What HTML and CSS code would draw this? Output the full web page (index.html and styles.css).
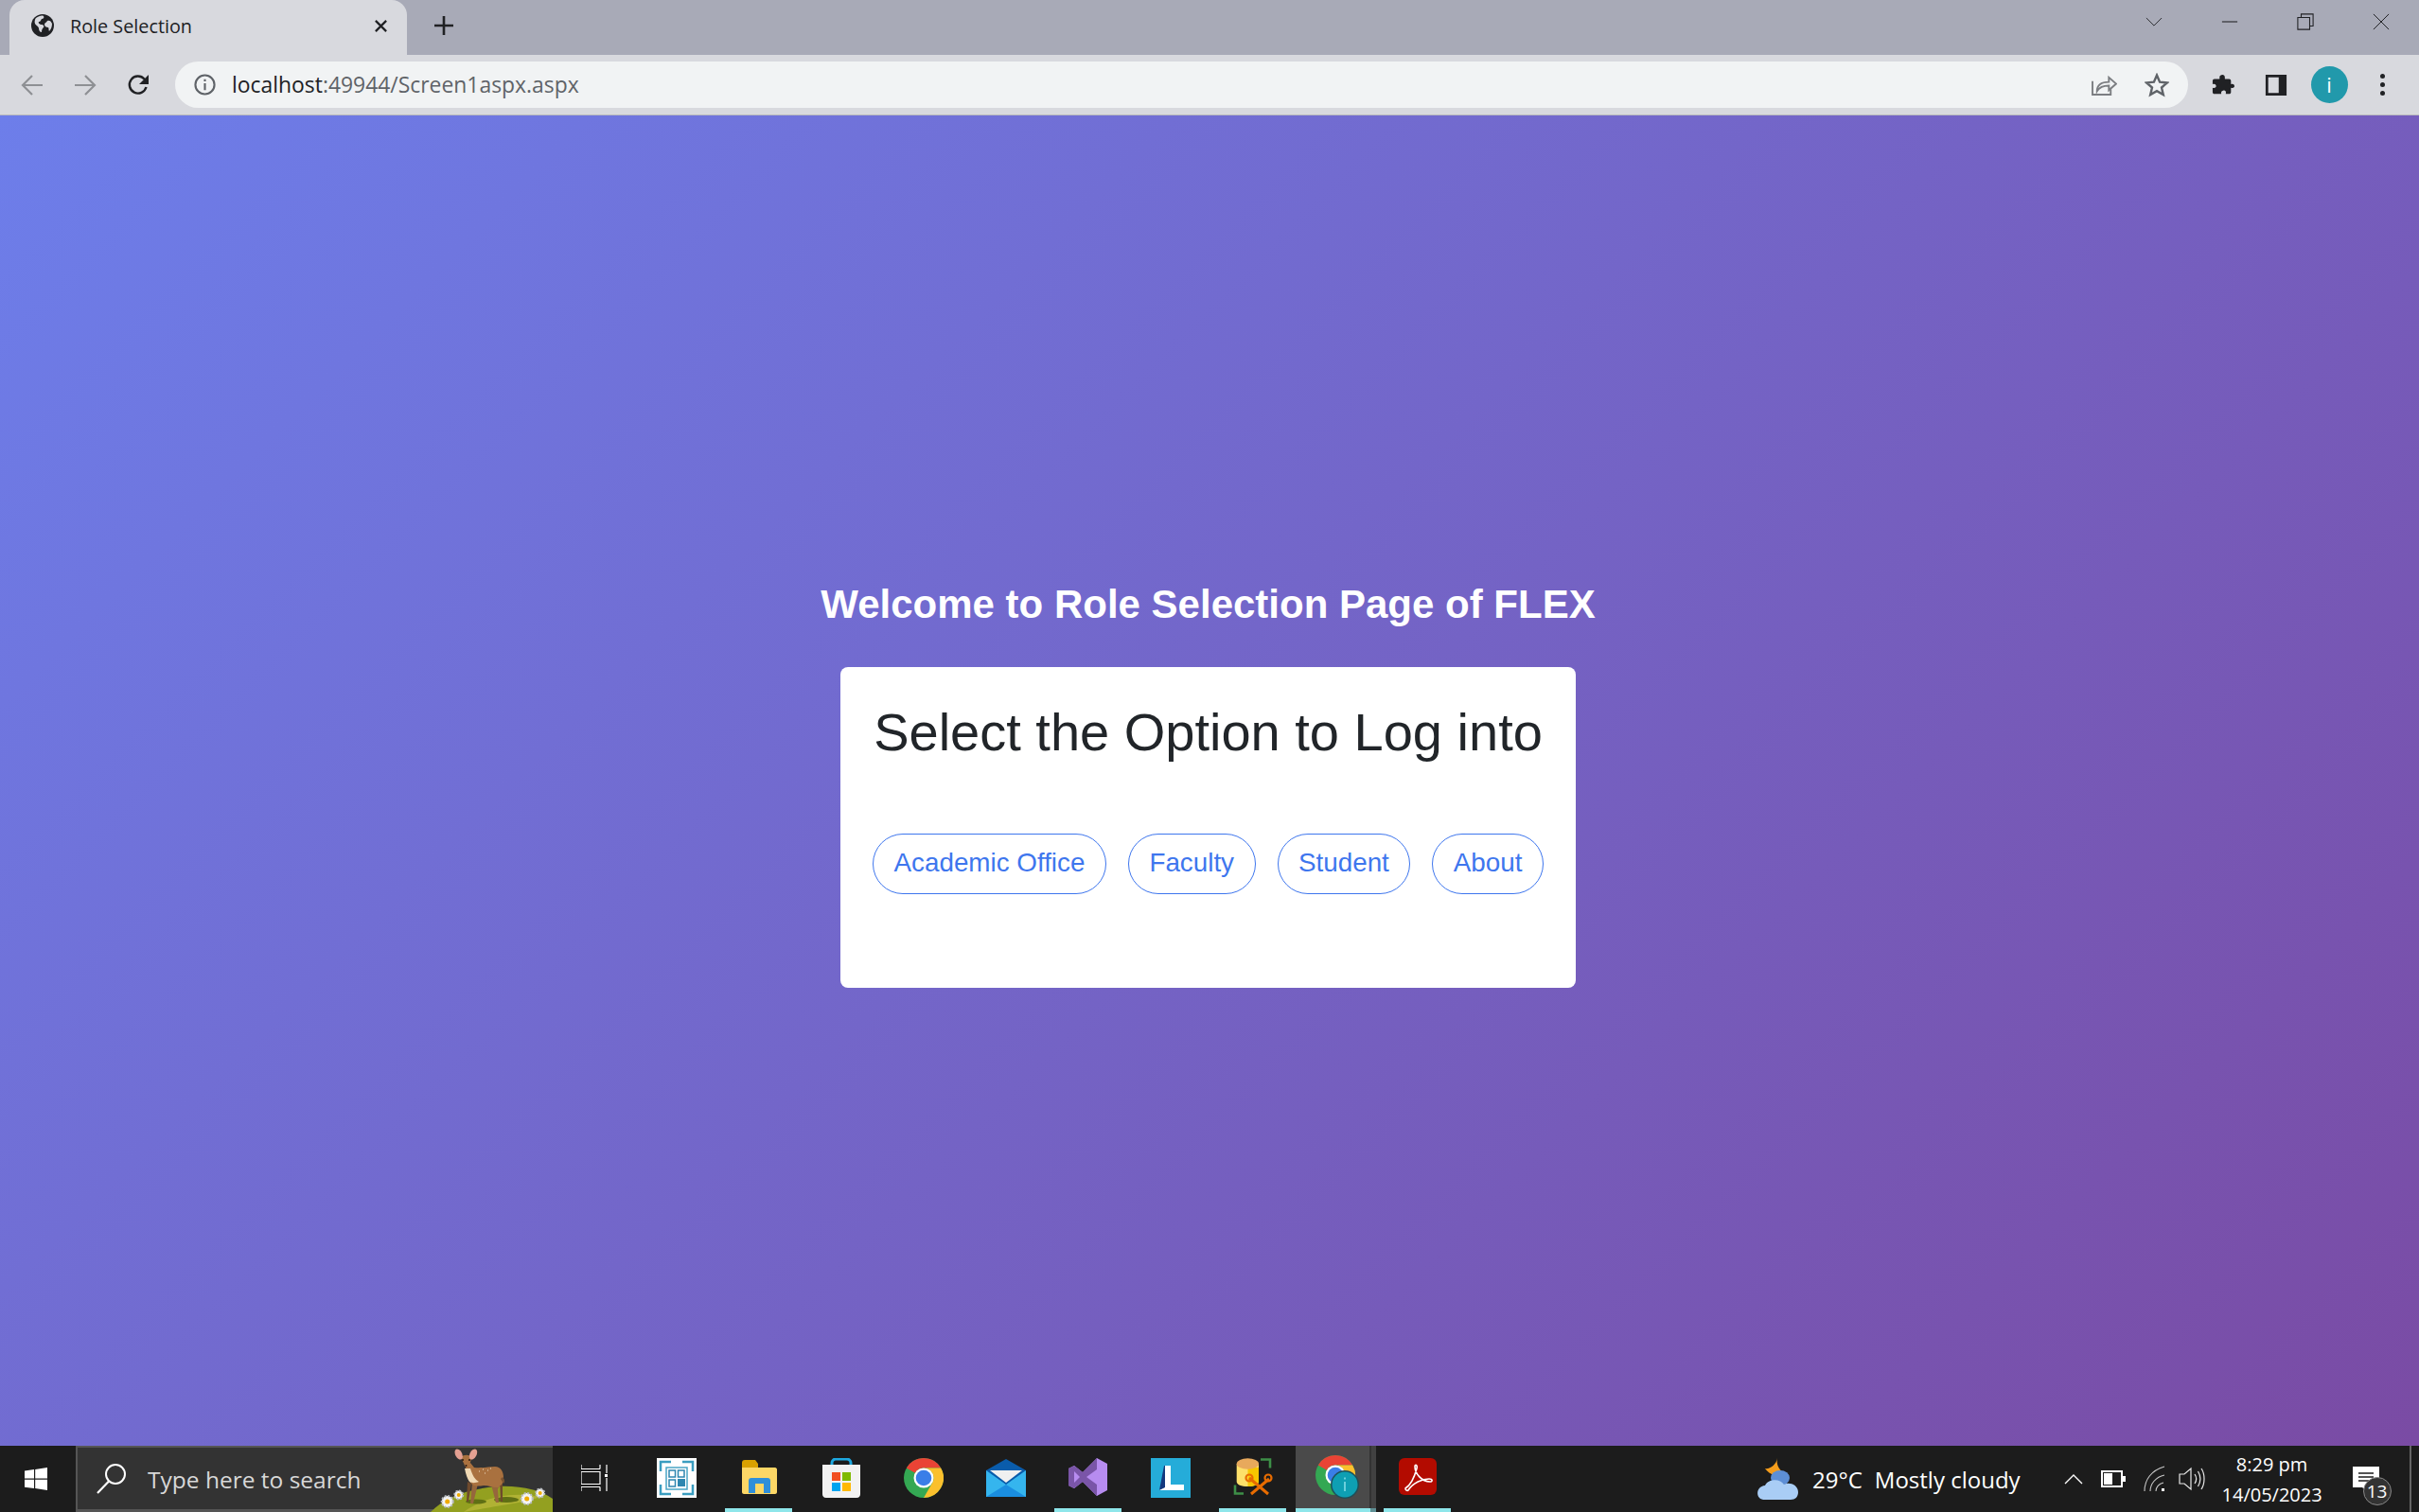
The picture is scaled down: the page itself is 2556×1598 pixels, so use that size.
FILE: index.html
```html
<!DOCTYPE html>
<html>
  <head>
    <meta charset="utf-8">
    <title>Role Selection</title>
    <link rel="stylesheet" href="styles.css">
  </head>
  <body>
    <div class="tabstrip">
      <div class="tab">
        <svg class="tab-globe" viewBox="0 0 24 24"><circle cx="12" cy="12" r="12" fill="#202124"/><path d="M5 4c3-2 6-3 8-2 1 1 0 3-2 3-1 1-1 3-3 3-1 1 1 3 3 3s3 2 2 3-2 2-2 5c-2 0-3-2-3-4s-3-3-4-5 0-5 1-6zM17 7c2-1 4 0 5 3 0 3-1 6-3 8-1-1 0-3-1-4-2 0-4-1-4-3s2-2 3-4z" fill="#d8d9de"/></svg>
        <span class="tab-title">Role Selection</span>
        <svg class="tab-close" viewBox="0 0 16 16"><path d="M2 2l12 12M14 2L2 14" stroke="#202124" stroke-width="2.4"/></svg>
      </div>
      <svg class="tab-new" viewBox="0 0 22 22"><path d="M11 1v20M1 11h20" stroke="#202124" stroke-width="2.6"/></svg>
      <div class="window-btns">
        <svg class="win-btn win-chevron" viewBox="0 0 20 12"><path d="M1 1l9 9 9-9" fill="none" stroke="#202124" stroke-width="1"/></svg>
        <svg class="win-btn" viewBox="0 0 20 20"><path d="M1 10h18" stroke="#202124" stroke-width="1.2"/></svg>
        <svg class="win-btn" viewBox="0 0 20 20"><path d="M1 5h14v14H1zM5 5V1h14v14h-4" fill="none" stroke="#202124" stroke-width="1.2"/></svg>
        <svg class="win-btn" viewBox="0 0 20 20"><path d="M1 1l18 18M19 1L1 19" stroke="#202124" stroke-width="1.1"/></svg>
      </div>
    </div>

    <div class="toolbar">
      <div class="nav-btn"><svg viewBox="0 0 24 24"><path d="M23 12H2M12 2L2 12l10 10" fill="none" stroke="#8e9094" stroke-width="2.2"/></svg></div>
      <div class="nav-btn"><svg viewBox="0 0 24 24"><path d="M1 12h21M12 2l10 10-10 10" fill="none" stroke="#8e9094" stroke-width="2.2"/></svg></div>
      <div class="nav-btn"><svg viewBox="0 0 24 24"><path d="M20.5 14a9 9 0 1 1-2-8.5L21 8" fill="none" stroke="#202124" stroke-width="2.4"/><path d="M23 1v10H13z" fill="#202124"/></svg></div>
      <div class="omnibox">
        <svg class="omni-info" viewBox="0 0 24 24"><circle cx="12" cy="12" r="10.5" fill="none" stroke="#5f6368" stroke-width="2.2"/><path d="M12 10.5V18M12 6v2.4" stroke="#5f6368" stroke-width="2.2"/></svg>
        <span class="url"><span class="url-host">localhost</span>:49944/Screen1aspx.aspx</span>
        <svg class="omni-share" viewBox="0 0 28 26"><path d="M1 9v15h20v-6" fill="none" stroke="#7c7e82" stroke-width="2"/><path d="M6 20c0-7 5-10 13-10V5l8 7-8 7v-5c-6 0-10 1-13 6z" fill="none" stroke="#7c7e82" stroke-width="2"/></svg>
        <svg class="omni-star" viewBox="0 0 26 26"><path d="M13 2.500l3.100 7.200 7.800.7-5.900 5.100 1.800 7.600L13 19.100l-6.800 4 1.800-7.600-5.900-5.100 7.800-.7z" fill="none" stroke="#5f6368" stroke-width="2.400"/></svg>
      </div>
      <div class="nav-btn nav-first"><svg viewBox="0 0 26 26"><path d="M10 2c2-2 5-1 5 2v2h5c1 0 2 1 2 2v4c3-1 4 1 4 2s-1 3-4 2v5c0 1-1 2-2 2h-4c1-3-1-4-2-4s-4 1-3 4H3c-1 0-2-1-2-2v-5c3 1 4-1 4-2S4 11 1 12V8c0-1 1-2 2-2h6V4c0-1 0-1 1-2z" fill="#202124"/></svg></div>
      <div class="nav-btn"><svg viewBox="0 0 26 26"><path d="M1 1h24v24H1zM4 4v18h12V4z" fill="#202124" fill-rule="evenodd"/></svg></div>
      <div class="nav-btn"><div class="avatar">i</div></div>
      <div class="nav-btn"><div class="dots"><i></i><i></i><i></i></div></div>
    </div>

    <main class="page">
      <h1 class="page-title">Welcome to Role Selection Page of FLEX</h1>
      <div class="card">
        <h2 class="card-title">Select the Option to Log into</h2>
        <div class="role-list">
          <a class="role-btn" href="#">Academic Office</a>
          <a class="role-btn" href="#">Faculty</a>
          <a class="role-btn" href="#">Student</a>
          <a class="role-btn" href="#">About</a>
        </div>
      </div>
    </main>

    <footer class="taskbar">
      <div class="start"><svg viewBox="0 0 24 24"><path d="M0 3.500l10-1.400v9.400H0zM11.200 2L24 0v11.500H11.200zM0 12.700h10v9.400L0 20.700zM11.200 12.700H24V24l-12.800-1.900z" fill="#fff"/></svg></div>
      <div class="search">
        <svg class="search-icon" viewBox="0 0 32 32"><circle cx="20" cy="11" r="10" fill="none" stroke="#fff" stroke-width="2"/><path d="M13 18.500L1 31" stroke="#fff" stroke-width="2.200"/></svg>
        <span class="search-text">Type here to search</span>
        <svg class="search-art" viewBox="0 0 134 70">
          <path d="M5 70c14-15 40-25 72-27 24-1 44 4 57 13v14z" fill="#93a020"/>
          <path d="M40 70c20-15 50-22 80-16-12 6-50 10-80 16z" fill="#b0b234"/>
          <ellipse cx="53" cy="59" rx="11" ry="2.500" fill="#5f6f14"/>
          <ellipse cx="85" cy="57" rx="13" ry="3" fill="#5f6f14"/>
          <!-- deer, far legs then body -->
          <path d="M44 38l-1 21h2l3-19zM78 36l1 23h2l0-22z" fill="#6f4a2c"/>
          <path d="M49 38l-2 23h3l5-21zM69 41l5 19h3l-1-14 3-6z" fill="#96663c"/>
          <path d="M41 20l6-2 4 5c8 1 16-1 22-1 6 0 9 5 9 12 0 5-2 8-6 10-6 0-10-2-15-2-6 1-10 1-13-2-3-3-4-8-4-12z" fill="#a9713f"/>
          <path d="M41 24c1 6 3 11 5 14 3 2 7 1 10 0-4-2-7-7-9-14z" fill="#f0d9b4"/>
          <path d="M81 33c2 2 3 5 1 7l-3-5z" fill="#7a5230"/>
          <path d="M37 12c3-3 9-3 11 0 0 4-2 8-3 10-2 1-3 0-4-1-1-3-3-6-4-9z" fill="#a9713f"/>
          <ellipse cx="34.700" cy="9" rx="3.500" ry="6" fill="#e4a092" transform="rotate(-28 34.700 9)"/>
          <ellipse cx="50" cy="9" rx="3.500" ry="6" fill="#e4a092" transform="rotate(28 50 9)"/>
          <circle cx="39" cy="15" r="1" fill="#2a1a10"/>
          <circle cx="46" cy="15" r="1" fill="#2a1a10"/>
          <circle cx="42.500" cy="21" r="1" fill="#2a1a10"/>
          <path d="M56 27h1M60 25h1M65 26h1M62 29h1M68 24h1" stroke="#f0e0c8" stroke-width="1.200"/>
          <circle class="daisy" cx="22.700" cy="59" r="6"/><circle cx="22.700" cy="59" r="2.500" fill="#efab00"/>
          <circle class="daisy" cx="34.700" cy="52" r="4.500"/><circle cx="34.700" cy="52" r="2" fill="#efab00"/>
          <circle class="daisy" cx="106.700" cy="56" r="6"/><circle cx="106.700" cy="56" r="2.500" fill="#efab00"/>
          <circle class="daisy" cx="120.700" cy="50" r="4.500"/><circle cx="120.700" cy="50" r="2" fill="#efab00"/>
        </svg>
      </div>
      <div class="slot"><svg class="ico-taskview" viewBox="0 0 28 28"><path d="M0 4.500h20M0 7.500h20v13H0zM0 23.500h20M20 28v-4.500M0 28v-4.500M0 4.500V0M20 4.500V0M27 0v9M27 14v14" fill="none" stroke="#fff" stroke-width="1.200"/><rect x="25" y="10" width="4" height="3" fill="#fff"/></svg></div>
      <div class="slot">
        <svg class="ico" viewBox="0 0 42 42"><rect width="42" height="42" fill="#fff"/><path d="M4 14V4h11M27 4h11v10M38 28v10H27M15 38H4V28" fill="none" stroke="#3a9dc0" stroke-width="2.500"/><rect x="10" y="10" width="22" height="23" fill="none" stroke="#4aa5c5" stroke-width="1.500"/><rect x="13" y="13" width="6.500" height="7" fill="none" stroke="#2e86b0" stroke-width="1.500"/><rect x="22.500" y="13" width="6.500" height="7" fill="none" stroke="#2e86b0" stroke-width="1.500"/><rect x="13" y="23" width="6.500" height="7" fill="none" stroke="#2e86b0" stroke-width="1.500"/><rect x="22" y="22" width="8" height="8" fill="#2e86b0"/></svg>
      </div>
      <div class="slot slot-open">
        <svg class="ico" viewBox="0 0 40 42"><path d="M2 6c0-2 1-3 3-3h11l3 4v6H2z" fill="#d9a100"/><path d="M2 11h35c1 0 2 1 2 2v24c0 1-1 2-2 2H4c-1 0-2-1-2-2z" fill="#fcd766"/><path d="M9 38V25c0-2 1-3 3-3h17c2 0 3 1 3 3v13h-7V28H16v10z" fill="#2f8fd9"/></svg>
      </div>
      <div class="slot">
        <svg class="ico" viewBox="0 0 40 42"><path d="M10 9V5c0-2 2-4 4-4h12c2 0 4 2 4 4v4" fill="none" stroke="#1da8e0" stroke-width="3"/><path d="M0 7h40v31c0 2-1 4-4 4H4c-3 0-4-2-4-4z" fill="#f2f2f2"/><rect x="10" y="15" width="9" height="9" fill="#f25022"/><rect x="21" y="15" width="9" height="9" fill="#7fba00"/><rect x="10" y="26" width="9" height="9" fill="#00a4ef"/><rect x="21" y="26" width="9" height="9" fill="#ffb900"/></svg>
      </div>
      <div class="slot">
        <svg class="ico" viewBox="0 0 42 42"><use href="#chrome-logo"/></svg>
      </div>
      <div class="slot">
        <svg class="ico" viewBox="0 0 42 42"><path d="M21 1L0 13v28h42V13z" fill="#0a5cab"/><path d="M4 13h34L21 26z" fill="#f0f0f0"/><path d="M0 13l21 15 21-15v28H0z" fill="#35b5ee"/><path d="M0 41l21-13 21 13z" fill="#1a8ee0"/></svg>
      </div>
      <div class="slot slot-open">
        <svg class="ico" viewBox="0 0 42 42"><path d="M30 1l11 6v28l-11 6-15-15-9 7-6-3V12l6-3 9 7z" fill="#b78cf0"/><path d="M30 1L15 16 6 9 0 12v18l6 3 9-7 15 15V29L19 21 30 13z" fill="#7a55a8"/><path d="M6 15v12l6-6z" fill="#b78cf0"/></svg>
      </div>
      <div class="slot">
        <svg class="ico" viewBox="0 0 42 42"><rect width="42" height="42" fill="#25acd9"/><path d="M9 34l6-2V8h-1z" fill="#13387e"/><path d="M15 8h6v20h14v6H9l6-3z" fill="#fff"/></svg>
      </div>
      <div class="slot slot-open">
        <svg class="ico" viewBox="0 0 42 42"><path d="M3.700 7v19c0 3 5 5 11.500 5S27 29 27 26V7z" fill="#fde06a"/><path d="M15.500 11H27v15c0 3-5 5-11.500 5z" fill="#f7c600"/><ellipse cx="15.400" cy="7" rx="11.700" ry="5.700" fill="#e8a95c"/><path d="M29 2.500h10v9M11 38.500H2v-9" fill="none" stroke="#3d8f47" stroke-width="2.600"/><path d="M17 22l20 17M38 23L19 39" stroke="#e86c00" stroke-width="3"/><circle cx="17" cy="22" r="3.500" fill="none" stroke="#e86c00" stroke-width="2.200"/><circle cx="37" cy="22" r="3.500" fill="none" stroke="#e86c00" stroke-width="2.200"/></svg>
      </div>
      <div class="slot slot-open slot-active">
        <svg class="ico" viewBox="0 0 46 46"><use href="#chrome-logo"/><circle cx="31" cy="31" r="15" fill="#1f4f58"/><circle cx="31" cy="31" r="13.500" fill="#0e9fb3"/><path d="M31 28v10M31 23.500v2" stroke="#6ccfdc" stroke-width="2"/></svg>
      </div>
      <div class="slot slot-open">
        <svg class="ico" viewBox="0 0 42 42"><rect width="40" height="39" x="1" y="1" rx="6" fill="#b30b00"/><path d="M8 33c5-3 9-10 12-21 1-4-2-5-2-2 0 7 7 16 16 16 3 0 3-3-1-3-7 0-17 4-22 12-1 1-3 0-3-2z" fill="none" stroke="#fff" stroke-width="1.600"/></svg>
      </div>
      <div class="tray">
        <svg class="ico-weather" viewBox="0 0 44 44"><path d="M21 0c-1 5 0 11 7 16l-9 3c-5-2-9-5-11-8 5 1 12-4 13-11z" fill="#f59d1c"/><ellipse cx="24" cy="21" rx="10" ry="8" fill="#5d8fd6"/><path d="M8 44c-11 0-10-14 0-15 3-7 16-8 20-1 5-3 15 0 15 8 0 5-3 8-8 8z" fill="#a9cdf5"/></svg>
        <span class="temp">29°C</span>
        <span class="cond">Mostly cloudy</span>
        <svg class="ico-chevron" viewBox="0 0 20 12"><path d="M1 11l9-9 9 9" fill="none" stroke="#fff" stroke-width="1.400"/></svg>
        <svg class="ico-battery" viewBox="0 0 26 18"><path d="M1 1h21v16H1z" fill="none" stroke="#fff" stroke-width="2"/><rect x="3" y="3" width="9" height="12" fill="#fff"/><rect x="23" y="6" width="3" height="6" fill="#fff"/></svg>
        <svg class="ico-wifi" viewBox="0 0 24 28"><path d="M1 27C1 15 8 5 22 1M7 27c0-8 6-15 15-17M13 27c0-4 3-8 8-9" fill="none" stroke="#c8c8c8" stroke-width="1.100"/><rect x="19" y="24" width="3" height="3" fill="#fff"/></svg>
        <svg class="ico-volume" viewBox="0 0 28 28"><path d="M1 9h5l7-6v22l-7-6H1zM17 9c2 3 2 7 0 10M20.500 6c3 5 3 11 0 16M24 3c4 6 4 16 0 22" fill="none" stroke="#e8e8e8" stroke-width="1.200"/></svg>
        <div class="clock"><span>8:29 pm</span><span>14/05/2023</span></div>
        <div class="notify">
          <svg class="ico-note" viewBox="0 0 28 26"><path d="M0 0h28v22H14l1 4-5-4H0z" fill="#fff"/><path d="M6 7h16M6 11h16M6 15h16" stroke="#1c1c1c" stroke-width="1.500"/></svg>
          <span class="badge">13</span>
        </div>
      </div>
    </footer>

    <svg class="defs" width="0" height="0">
      <defs>
        <g id="chrome-logo">
          <circle cx="21" cy="21" r="21" fill="#34a853"/>
          <path d="M21 0A21 21 0 0 1 39.190 10.500H21A10.500 10.500 0 0 0 11.900 15.750L2.810 10.500A21 21 0 0 1 21 0z" fill="#ea4335"/>
          <path d="M39.190 10.500A21 21 0 0 1 21 42L30.090 26.250A10.500 10.500 0 0 0 21 10.500z" fill="#fbc02d"/>
          <circle cx="21" cy="21" r="10.500" fill="#fff"/>
          <circle cx="21" cy="21" r="8.300" fill="#3a7ee8"/>
        </g>
      </defs>
    </svg>
  </body>
</html>
```

FILE: styles.css
```css
html, body {
  height: 100%;
  margin: 0;
}
body {
  display: flex;
  flex-direction: column;
  overflow: hidden;
  font-family: "Liberation Sans", Arial, sans-serif;
}

/* browser frame */
.tabstrip {
  height: 58px;
  flex: none;
  display: flex;
  align-items: center;
  background-color: #a8aab7;
}
.tab {
  width: 420px;
  height: 58px;
  margin-left: 10px;
  box-sizing: border-box;
  display: flex;
  align-items: center;
  padding: 0 20px 4px 23px;
  background-color: #d8d9de;
  border-radius: 16px 16px 0 0;
}
.tab-globe {
  width: 24px;
  height: 24px;
}
.tab-title {
  flex: 1;
  margin-left: 17px;
  font: 19.8px "Open Sans", sans-serif;
  color: #202124;
}
.tab-close {
  width: 15px;
  height: 15px;
}
.tab-new {
  width: 22px;
  height: 22px;
  margin: -4px 0 0 28px;
}
.window-btns {
  margin-left: auto;
  display: flex;
  align-items: center;
  gap: 62px;
  padding: 0 31px 12px 0;
}
.win-btn {
  width: 18px;
  height: 18px;
}
.win-chevron {
  height: 11px;
}

.toolbar {
  height: 63px;
  flex: none;
  display: flex;
  align-items: center;
  padding: 0 11px 0 6px;
  background-color: #d8d9de;
  border-bottom: 1px solid #b9babd;
}
.nav-btn {
  width: 56px;
  height: 49px;
  flex: none;
  display: flex;
  align-items: center;
  justify-content: center;
}
.nav-btn svg {
  width: 24px;
  height: 24px;
}
.nav-first {
  margin-left: 9px;
}
.omnibox {
  flex: 1;
  height: 49px;
  margin-left: 11px;
  display: flex;
  align-items: center;
  padding: 0 20px;
  background-color: #f1f3f4;
  border-radius: 25px;
}
.omni-info {
  width: 23px;
  height: 23px;
}
.url {
  flex: 1;
  margin-left: 17px;
  font: 22.9px "Open Sans", sans-serif;
  color: #5f6368;
}
.url-host {
  color: #202124;
}
.omni-share {
  width: 27px;
  height: 25px;
}
.omni-star {
  width: 26px;
  height: 26px;
  margin-left: 29px;
}
.avatar {
  width: 39px;
  height: 39px;
  border-radius: 50%;
  background-color: #2199ab;
  color: #fff;
  font: 22px/39px "Open Sans", sans-serif;
  text-align: center;
}
.dots {
  display: flex;
  flex-direction: column;
  gap: 4px;
}
.dots i {
  width: 5px;
  height: 5px;
  border-radius: 50%;
  background-color: #202124;
}

/* page */
.page {
  flex: 1;
  display: flex;
  flex-direction: column;
  align-items: center;
  padding: 492px 3px 0 0;
  background: linear-gradient(135deg, #6d7eea, #7a4ba4);
}
.page-title {
  margin: 0;
  font-size: 42px;
  line-height: 50px;
  font-weight: bold;
  color: #fff;
}
.card {
  width: 777px;
  height: 339px;
  margin-top: 41px;
  box-sizing: border-box;
  padding: 35px 35px 0;
  background-color: #fff;
  border-radius: 8px;
}
.card-title {
  margin: 0;
  font-size: 56px;
  line-height: 67px;
  font-weight: normal;
  color: #212529;
  text-align: center;
  white-space: nowrap;
}
.role-list {
  display: flex;
  justify-content: center;
  gap: 23px;
  margin-top: 74px;
}
.role-btn {
  height: 64px;
  box-sizing: border-box;
  padding: 0 21.5px;
  border: 1px solid #3e76ee;
  border-radius: 32px;
  font-size: 27.8px;
  line-height: 60px;
  color: #3e76ee;
  text-decoration: none;
  white-space: nowrap;
}

/* windows taskbar */
.taskbar {
  height: 70px;
  flex: none;
  display: flex;
  align-items: stretch;
  background-color: #1c1c1c;
  color: #fff;
  font-family: "Open Sans", sans-serif;
}
.start {
  width: 80px;
  flex: none;
  display: flex;
  align-items: center;
  padding-left: 26px;
  box-sizing: border-box;
}
.start svg {
  width: 24px;
  height: 24px;
}
.search {
  width: 504px;
  flex: none;
  position: relative;
  box-sizing: border-box;
  display: flex;
  align-items: center;
  padding-left: 20px;
  background-color: #333;
  border: 2px solid #555;
  border-bottom-width: 3px;
  border-right-width: 0;
}
.search-icon {
  width: 32px;
  height: 32px;
}
.search-text {
  margin: 2px 0 0 22px;
  font-size: 24.5px;
  color: #d8d8d8;
}
.search-art {
  position: absolute;
  right: 0;
  bottom: -3px;
  width: 134px;
  height: 70px;
}
.daisy {
  fill: #f4f4f4;
  stroke: #b8bcc0;
  stroke-width: 2;
  stroke-dasharray: 2 1.5;
}
.slot {
  width: 87px;
  flex: none;
  box-sizing: border-box;
  display: flex;
  align-items: center;
  justify-content: center;
  padding-bottom: 2px;
}
.ico {
  width: 42px;
  height: 42px;
}
.ico-taskview {
  width: 28px;
  height: 28px;
}
.slot-open {
  border-bottom: 4px solid transparent;
  padding-bottom: 0;
  border-image: linear-gradient(to right, transparent 9px, #8ee6ea 9px, #8ee6ea 78px, transparent 78px) 1;
}
.slot-active {
  width: 85px;
  margin-left: 2px;
  padding-right: 1px;
  background: linear-gradient(to right, #4a4a4a 78px, #333 78px, #333 80px, #414141 80px);
  background-clip: padding-box;
  border-image: linear-gradient(to right, #8ee6ea 78px, #5f8f94 78px) 1;
}
.slot-active .ico {
  width: 46px;
  height: 46px;
  margin: 0 -4px 0 0;
}
.tray {
  flex: 1;
  display: flex;
  align-items: center;
  padding-left: 316px;
  border-right: 2px solid #666;
  margin-right: 8px;
  font-size: 24px;
}
.ico-weather {
  width: 44px;
  height: 44px;
  flex: none;
}
.temp {
  margin-left: 14px;
}
.cond {
  margin-left: 13px;
}
.ico-chevron {
  width: 20px;
  height: 12px;
  margin-left: 46px;
}
.ico-battery {
  width: 26px;
  height: 18px;
  margin-left: 19px;
}
.ico-wifi {
  width: 24px;
  height: 28px;
  margin-left: 19px;
}
.ico-volume {
  width: 28px;
  height: 28px;
  margin-left: 13px;
}
.clock {
  width: 104px;
  margin-left: 19px;
  display: flex;
  flex-direction: column;
  align-items: center;
  gap: 5px;
  font-size: 20px;
  line-height: 27px;
}
.notify {
  margin-left: 33px;
  position: relative;
  display: flex;
}
.ico-note {
  width: 28px;
  height: 26px;
}
.badge {
  position: absolute;
  left: 11px;
  top: 11px;
  width: 28px;
  height: 28px;
  border-radius: 50%;
  background-color: #333;
  border: 1px solid #888;
  font-size: 19px;
  line-height: 28px;
  text-align: center;
}
.defs {
  position: absolute;
}
```
